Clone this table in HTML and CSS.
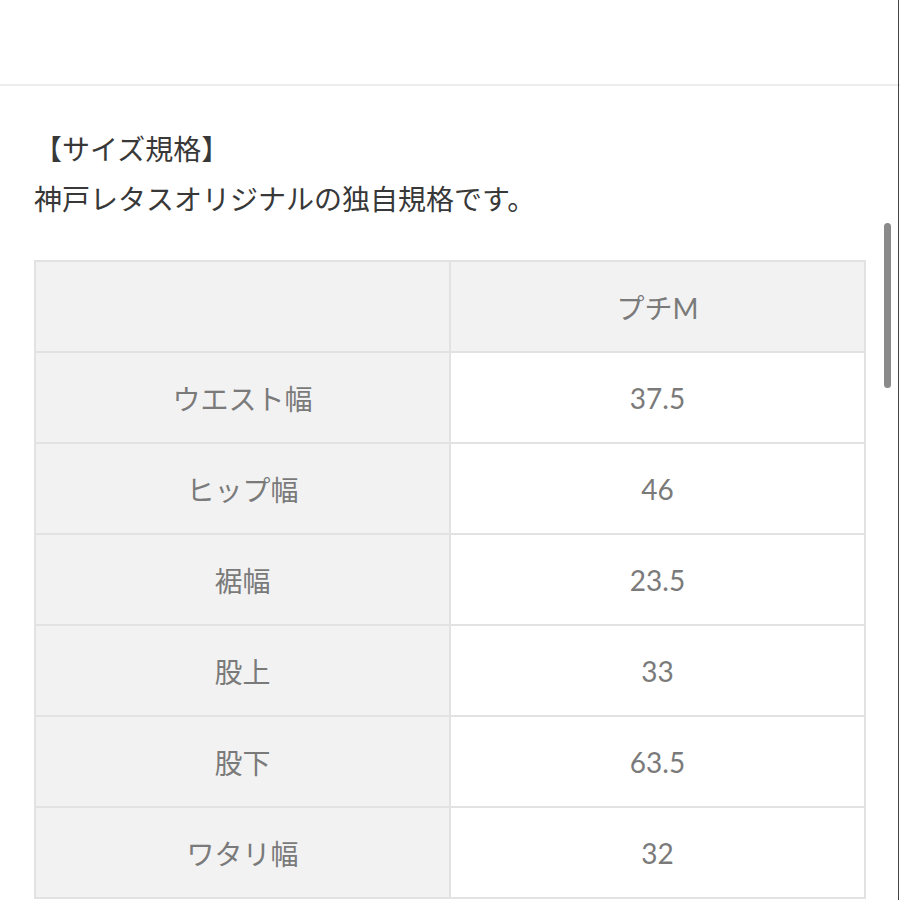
FILE: index.html
```html
<!DOCTYPE html>
<html lang="ja">
<head>
<meta charset="utf-8">
<link rel="stylesheet" href="styles.css">
</head>
<body>
<div class="page">
  <header class="topbar"></header>
  <main class="content">
    <p class="intro">【サイズ規格】<br>神戸レタスオリジナルの独自規格です。</p>
    <table class="size-table">
      <tr class="head"><th></th><th>プチM</th></tr>
      <tr><th>ウエスト幅</th><td>37.5</td></tr>
      <tr><th>ヒップ幅</th><td>46</td></tr>
      <tr><th>裾幅</th><td>23.5</td></tr>
      <tr><th>股上</th><td>33</td></tr>
      <tr><th>股下</th><td>63.5</td></tr>
      <tr><th>ワタリ幅</th><td>32</td></tr>
    </table>
  </main>
  <div class="scrollbar"></div>
  <div class="edge"></div>
</div>
</body>
</html>
```
FILE: styles.css
```css
html, body {
  margin: 0;
  padding: 0;
  background: #fff;
}
body {
  font-family: Lato, "Noto Sans CJK JP", sans-serif;
}
.page {
  position: relative;
  width: 900px;
  height: 900px;
  overflow: hidden;
}
.topbar {
  height: 84px;
  border-bottom: 2px solid #ececec;
}
.content {
  padding: 37px 34px 0 34px;
}
.intro {
  margin: 0;
  font-family: "Noto Sans CJK JP", sans-serif;
  font-size: 28px;
  line-height: 50px;
  color: #383838;
}
.size-table {
  margin-top: 37px;
  width: 832px;
  border-collapse: collapse;
  table-layout: fixed;
}
.size-table th,
.size-table td {
  height: 89px;
  padding: 0;
  border: 2px solid #e2e2e2;
  text-align: center;
  vertical-align: middle;
  font-size: 28px;
  font-weight: 400;
  color: #7a7a7a;
  font-family: Lato, "Noto Sans CJK JP", sans-serif;
}
.size-table th {
  width: 411px;
  background: #f2f2f2;
}
.size-table td {
  background: #fff;
}
.size-table .head th {
  background: #f2f2f2;
}
.scrollbar {
  position: absolute;
  left: 884px;
  top: 223px;
  width: 7px;
  height: 165px;
  border-radius: 4px;
  background: #8a8a8a;
}
.edge {
  position: absolute;
  right: 1px;
  top: 0;
  width: 1px;
  height: 900px;
  background: #444;
}
```
